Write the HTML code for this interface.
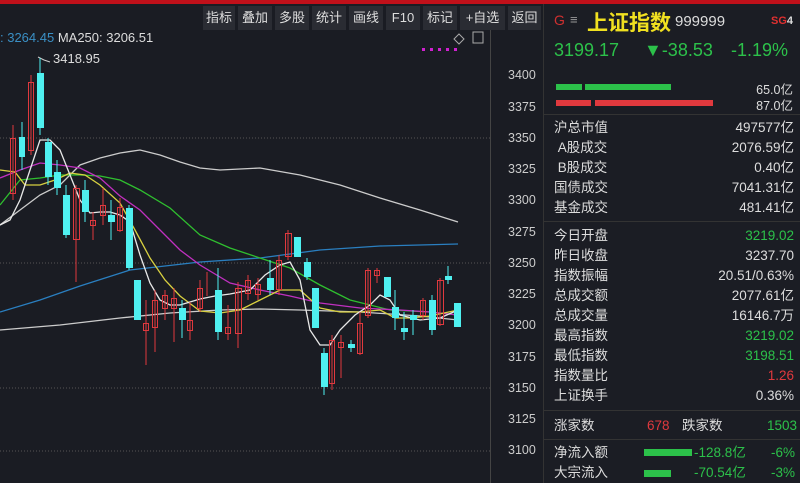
<!DOCTYPE html>
<html><head><meta charset="utf-8"><style>
*{margin:0;padding:0;box-sizing:border-box}
body{width:800px;height:483px;background:#1a1c23;overflow:hidden;position:relative;font-family:"Liberation Sans","Noto Sans CJK SC",sans-serif;color:#ddd}
.top{position:absolute;left:0;top:0;width:800px;height:4px;background:#c0101a}
.tb{position:absolute;top:6px;height:24px;background:#2a2c33;color:#ddd;font-size:13px;line-height:24px;text-align:center}
.panel{position:absolute;left:543px;top:4px;width:257px;height:479px;background:#1b1d24;border-left:1px solid #333}
.row{position:absolute;left:10px;width:240px;font-size:13.5px;height:20px;line-height:20px}
.row span{position:absolute;right:0}
.g{color:#2cc14a}.r{color:#e0393e}.w{color:#ddd}
.ax{position:absolute;left:508px;font-size:12.5px;color:#ccc}
.sep{position:absolute;left:0;width:257px;height:1px;background:#333}
</style></head><body>
<div class="top"></div>
<div class="tb" style="left:203px;width:32px">指标</div>
<div class="tb" style="left:238px;width:34px">叠加</div>
<div class="tb" style="left:275px;width:34px">多股</div>
<div class="tb" style="left:312px;width:34px">统计</div>
<div class="tb" style="left:349px;width:34px">画线</div>
<div class="tb" style="left:386px;width:34px">F10</div>
<div class="tb" style="left:423px;width:34px">标记</div>
<div class="tb" style="left:460px;width:45px">+自选</div>
<div class="tb" style="left:508px;width:33px">返回</div>
<div style="position:absolute;left:0;top:30px;font-size:13px;color:#ddd"><span style="color:#3a8fc4">: 3264.45</span> MA250: 3206.51</div>
<div style="position:absolute;left:53px;top:51px;font-size:13px;color:#ddd">3418.95</div>
<svg style="position:absolute;left:0;top:0" width="543" height="483">
<g stroke="#555" stroke-dasharray="1,2"><line x1="0" y1="138" x2="490" y2="138"/><line x1="0" y1="263" x2="490" y2="263"/><line x1="0" y1="388" x2="490" y2="388"/><line x1="0" y1="451" x2="490" y2="451"/></g>
<line x1="490.5" y1="30" x2="490.5" y2="483" stroke="#444"/>
<polyline points="38,57 44,60 50,62" stroke="#ccc" fill="none"/>
<g fill="#d020d0"><rect x="422" y="48" width="3" height="3"/><rect x="430" y="48" width="3" height="3"/><rect x="438" y="48" width="3" height="3"/><rect x="446" y="48" width="3" height="3"/><rect x="454" y="48" width="3" height="3"/></g>
<path d="M459 34 l5 5 -5 5 -5 -5z" stroke="#aaa" fill="none"/><rect x="473" y="32" width="10" height="11" stroke="#aaa" fill="none"/>
<g fill="none" stroke-width="1.3">
<polyline stroke="#ccc" points="0,225 20,210 40,195 60,185 80,165 100,158 120,153 140,150 160,155 180,162 200,168 220,170 260,168 300,175 340,185 380,198 420,210 458,222"/>
<polyline stroke="#ccc" points="0,330 60,325 120,318 170,313 220,310 260,309 300,310 360,312 420,316 458,320"/>
<polyline stroke="#2a7fc0" points="0,312 40,300 80,286 130,270 200,262 260,258 320,250 380,246 420,245 458,244"/>
<polyline stroke="#2fbf2f" points="0,205 20,180 40,178 60,175 80,175 100,176 120,180 140,190 170,208 200,235 230,248 260,258 290,268 320,285 350,300 390,310 430,312 458,315"/>
<polyline stroke="#c030c0" points="0,178 20,170 40,163 60,165 80,168 100,178 120,196 140,210 160,230 180,250 200,265 230,283 260,290 290,296 320,303 360,308 400,310 430,312 458,315"/>
<polyline stroke="#d8d040" points="0,170 15,172 25,185 40,185 55,180 70,173 85,175 100,185 120,203 135,230 150,258 165,280 180,296 200,311 220,313 240,310 260,300 280,290 300,290 320,308 340,312 360,312 380,310 395,318 410,318 430,316 458,310"/>
<polyline stroke="#e8e8e8" points="0,225 10,220 20,200 30,170 40,140 50,140 60,150 70,175 80,200 90,213 100,212 110,212 120,215 130,222 140,255 150,283 160,300 170,305 180,305 190,302 200,299 215,296 230,294 250,290 265,275 280,265 290,262 300,280 310,330 320,345 330,345 340,330 355,315 370,305 380,295 390,300 400,315 420,320 440,318 458,310"/>
</g>
</svg>
<div class="ax" style="top:68px">3400</div><div class="ax" style="top:100px">3375</div><div class="ax" style="top:131px">3350</div><div class="ax" style="top:162px">3325</div><div class="ax" style="top:193px">3300</div><div class="ax" style="top:225px">3275</div><div class="ax" style="top:256px">3250</div><div class="ax" style="top:287px">3225</div><div class="ax" style="top:318px">3200</div><div class="ax" style="top:350px">3175</div><div class="ax" style="top:381px">3150</div><div class="ax" style="top:412px">3125</div><div class="ax" style="top:443px">3100</div>
<div class="panel">
<div style="position:absolute;left:10px;top:8px;font-size:14px;color:#d03030">G</div>
<div style="position:absolute;left:26px;top:8px;font-size:13px;color:#999">≡</div>
<div style="position:absolute;left:43px;top:3px;font-size:21px;color:#f0e020;font-weight:bold">上证指数</div>
<div style="position:absolute;left:131px;top:9px;font-size:15px;color:#ddd">999999</div>
<div style="position:absolute;left:227px;top:11px;font-size:11px;color:#e03030;font-weight:bold">SG<span style="color:#ddd">4</span></div>
<div style="position:absolute;left:10px;top:36px;font-size:18px;color:#2cc14a">3199.17</div>
<div style="position:absolute;left:100px;top:36px;font-size:18px;color:#2cc14a">▼-38.53</div>
<div style="position:absolute;left:187px;top:36px;font-size:18px;color:#2cc14a">-1.19%</div>
<div style="position:absolute;left:12px;top:80px;width:26px;height:6px;background:#2cc14a"></div>
<div style="position:absolute;left:41px;top:80px;width:86px;height:6px;background:#2cc14a"></div>
<div style="position:absolute;left:12px;top:96px;width:35px;height:6px;background:#e0393e"></div>
<div style="position:absolute;left:51px;top:96px;width:118px;height:6px;background:#e0393e"></div>
<div style="position:absolute;right:7px;top:75px;font-size:12.5px;color:#ddd">65.0亿</div>
<div style="position:absolute;right:7px;top:91px;font-size:12.5px;color:#ddd">87.0亿</div>
<div class="sep" style="top:110px"></div>
<div class="row" style="top:114px">沪总市值<span>497577亿</span></div>
<div class="row" style="top:134px">&nbsp;A股成交<span>2076.59亿</span></div>
<div class="row" style="top:154px">&nbsp;B股成交<span>0.40亿</span></div>
<div class="row" style="top:174px">国债成交<span>7041.31亿</span></div>
<div class="row" style="top:194px">基金成交<span>481.41亿</span></div>
<div class="sep" style="top:217px"></div>
<div class="row" style="top:222px">今日开盘<span class="g">3219.02</span></div>
<div class="row" style="top:242px">昨日收盘<span>3237.70</span></div>
<div class="row" style="top:262px">指数振幅<span>20.51/0.63%</span></div>
<div class="row" style="top:282px">总成交额<span>2077.61亿</span></div>
<div class="row" style="top:302px">总成交量<span>16146.7万</span></div>
<div class="row" style="top:322px">最高指数<span class="g">3219.02</span></div>
<div class="row" style="top:342px">最低指数<span class="g">3198.51</span></div>
<div class="row" style="top:362px">指数量比<span class="r">1.26</span></div>
<div class="row" style="top:382px">上证换手<span>0.36%</span></div>
<div class="sep" style="top:406px"></div>
<div class="row" style="top:412px">涨家数</div>
<div style="position:absolute;left:103px;top:412px;font-size:13.5px;line-height:20px" class="r">678</div>
<div style="position:absolute;left:138px;top:412px;font-size:13.5px;line-height:20px">跌家数</div>
<div style="position:absolute;right:3px;top:412px;font-size:13.5px;line-height:20px" class="g">1503</div>
<div class="sep" style="top:435px"></div>
<div class="row" style="top:439px">净流入额</div>
<div style="position:absolute;left:100px;top:445px;width:48px;height:7px;background:#2cc14a"></div>
<div style="position:absolute;left:150px;top:439px;font-size:13.5px;line-height:20px" class="g">-128.8亿</div>
<div style="position:absolute;right:5px;top:439px;font-size:13.5px;line-height:20px" class="g">-6%</div>
<div class="row" style="top:459px">大宗流入</div>
<div style="position:absolute;left:100px;top:466px;width:27px;height:7px;background:#2cc14a"></div>
<div style="position:absolute;left:150px;top:459px;font-size:13.5px;line-height:20px" class="g">-70.54亿</div>
<div style="position:absolute;right:5px;top:459px;font-size:13.5px;line-height:20px" class="g">-3%</div>
</div>
<svg style="position:absolute;left:0;top:0" width="490" height="483">
<g stroke-width="1">
<line x1="13" y1="125" x2="13" y2="200" stroke="#e0393e"/><rect x="10.5" y="138.5" width="5" height="55" fill="none" stroke="#e0393e"/>
<line x1="22" y1="122" x2="22" y2="170" stroke="#4ff0f0"/><rect x="19" y="137" width="6" height="20" fill="#4ff0f0"/>
<line x1="31" y1="75" x2="31" y2="155" stroke="#e0393e"/><rect x="28.5" y="82.5" width="5" height="68" fill="none" stroke="#e0393e"/>
<line x1="40" y1="58" x2="40" y2="135" stroke="#4ff0f0"/><rect x="37" y="73" width="7" height="55" fill="#4ff0f0"/>
<line x1="48" y1="138" x2="48" y2="185" stroke="#4ff0f0"/><rect x="45" y="142" width="7" height="35" fill="#4ff0f0"/>
<line x1="57" y1="160" x2="57" y2="195" stroke="#4ff0f0"/><rect x="54" y="172" width="7" height="16" fill="#4ff0f0"/>
<line x1="66" y1="185" x2="66" y2="238" stroke="#4ff0f0"/><rect x="63" y="195" width="7" height="40" fill="#4ff0f0"/>
<line x1="76" y1="185" x2="76" y2="282" stroke="#e0393e"/><rect x="73.5" y="188.5" width="6" height="51" fill="none" stroke="#e0393e"/>
<line x1="85" y1="180" x2="85" y2="222" stroke="#4ff0f0"/><rect x="82" y="190" width="7" height="22" fill="#4ff0f0"/>
<line x1="93" y1="212" x2="93" y2="240" stroke="#e0393e"/><rect x="90.5" y="220.5" width="5" height="5" fill="none" stroke="#e0393e"/>
<line x1="103" y1="188" x2="103" y2="225" stroke="#e0393e"/><rect x="100.5" y="205.5" width="5" height="10" fill="none" stroke="#e0393e"/>
<line x1="111" y1="200" x2="111" y2="240" stroke="#4ff0f0"/><rect x="108" y="215" width="7" height="7" fill="#4ff0f0"/>
<line x1="120" y1="198" x2="120" y2="232" stroke="#e0393e"/><rect x="117.5" y="207.5" width="5" height="23" fill="none" stroke="#e0393e"/>
<line x1="129" y1="205" x2="129" y2="270" stroke="#4ff0f0"/><rect x="126" y="208" width="7" height="60" fill="#4ff0f0"/>
<rect x="134" y="280" width="7" height="40" fill="#4ff0f0"/>
<line x1="146" y1="300" x2="146" y2="365" stroke="#e0393e"/><rect x="143.5" y="323.5" width="5" height="7" fill="none" stroke="#e0393e"/>
<line x1="155" y1="290" x2="155" y2="352" stroke="#e0393e"/><rect x="152.5" y="300.5" width="5" height="27" fill="none" stroke="#e0393e"/>
<line x1="165" y1="290" x2="165" y2="320" stroke="#e0393e"/><rect x="162.5" y="295.5" width="5" height="13" fill="none" stroke="#e0393e"/>
<line x1="174" y1="288" x2="174" y2="342" stroke="#e0393e"/><rect x="171.5" y="298.5" width="5" height="10" fill="none" stroke="#e0393e"/>
<line x1="182" y1="300" x2="182" y2="338" stroke="#4ff0f0"/><rect x="179" y="308" width="7" height="12" fill="#4ff0f0"/>
<line x1="190" y1="302" x2="190" y2="340" stroke="#e0393e"/><rect x="187.5" y="320.5" width="5" height="10" fill="none" stroke="#e0393e"/>
<line x1="200" y1="280" x2="200" y2="312" stroke="#e0393e"/><rect x="197.5" y="288.5" width="5" height="20" fill="none" stroke="#e0393e"/>
<line x1="207" y1="272" x2="207" y2="296" stroke="#e0393e"/>
<line x1="218" y1="268" x2="218" y2="340" stroke="#4ff0f0"/><rect x="215" y="290" width="7" height="42" fill="#4ff0f0"/>
<line x1="228" y1="305" x2="228" y2="340" stroke="#e0393e"/><rect x="225.5" y="327.5" width="5" height="6" fill="none" stroke="#e0393e"/>
<line x1="238" y1="282" x2="238" y2="348" stroke="#e0393e"/><rect x="235.5" y="288.5" width="6" height="45" fill="none" stroke="#e0393e"/>
<line x1="248" y1="275" x2="248" y2="300" stroke="#e0393e"/><rect x="245.5" y="280.5" width="5" height="13" fill="none" stroke="#e0393e"/>
<line x1="258" y1="278" x2="258" y2="300" stroke="#e0393e"/><rect x="255.5" y="284.5" width="5" height="10" fill="none" stroke="#e0393e"/>
<line x1="270" y1="260" x2="270" y2="295" stroke="#4ff0f0"/><rect x="267" y="278" width="7" height="12" fill="#4ff0f0"/>
<line x1="279" y1="255" x2="279" y2="295" stroke="#e0393e"/><rect x="276.5" y="260.5" width="5" height="29" fill="none" stroke="#e0393e"/>
<line x1="288" y1="230" x2="288" y2="260" stroke="#e0393e"/><rect x="285.5" y="233.5" width="6" height="23" fill="none" stroke="#e0393e"/>
<rect x="294" y="237" width="7" height="20" fill="#4ff0f0"/>
<line x1="307" y1="258" x2="307" y2="280" stroke="#4ff0f0"/><rect x="304" y="262" width="7" height="15" fill="#4ff0f0"/>
<rect x="312" y="288" width="7" height="40" fill="#4ff0f0"/>
<line x1="324" y1="348" x2="324" y2="395" stroke="#4ff0f0"/><rect x="321" y="353" width="7" height="34" fill="#4ff0f0"/>
<line x1="332" y1="335" x2="332" y2="390" stroke="#e0393e"/><rect x="329.5" y="340.5" width="5" height="43" fill="none" stroke="#e0393e"/>
<line x1="341" y1="335" x2="341" y2="378" stroke="#e0393e"/><rect x="338.5" y="342.5" width="5" height="5" fill="none" stroke="#e0393e"/>
<line x1="351" y1="340" x2="351" y2="352" stroke="#4ff0f0"/><rect x="348" y="344" width="7" height="4" fill="#4ff0f0"/>
<line x1="360" y1="312" x2="360" y2="355" stroke="#e0393e"/><rect x="357.5" y="323.5" width="5" height="30" fill="none" stroke="#e0393e"/>
<line x1="368" y1="268" x2="368" y2="318" stroke="#e0393e"/><rect x="365.5" y="270.5" width="5" height="45" fill="none" stroke="#e0393e"/>
<line x1="377" y1="268" x2="377" y2="283" stroke="#e0393e"/><rect x="374.5" y="270.5" width="5" height="5" fill="none" stroke="#e0393e"/>
<rect x="384" y="277" width="7" height="20" fill="#4ff0f0"/>
<line x1="395" y1="290" x2="395" y2="330" stroke="#4ff0f0"/><rect x="392" y="307" width="7" height="11" fill="#4ff0f0"/>
<line x1="404" y1="312" x2="404" y2="340" stroke="#4ff0f0"/><rect x="401" y="328" width="7" height="4" fill="#4ff0f0"/>
<line x1="413" y1="310" x2="413" y2="335" stroke="#4ff0f0"/><rect x="410" y="315" width="7" height="5" fill="#4ff0f0"/>
<line x1="423" y1="298" x2="423" y2="320" stroke="#e0393e"/><rect x="420.5" y="300.5" width="5" height="15" fill="none" stroke="#e0393e"/>
<line x1="432" y1="295" x2="432" y2="335" stroke="#4ff0f0"/><rect x="429" y="300" width="7" height="30" fill="#4ff0f0"/>
<line x1="440" y1="278" x2="440" y2="326" stroke="#e0393e"/><rect x="437.5" y="280.5" width="6" height="44" fill="none" stroke="#e0393e"/>
<line x1="448" y1="266" x2="448" y2="284" stroke="#4ff0f0"/><rect x="445" y="276" width="7" height="4" fill="#4ff0f0"/>
<rect x="454" y="303" width="7" height="24" fill="#4ff0f0"/>
</g>
</svg>
</body></html>
